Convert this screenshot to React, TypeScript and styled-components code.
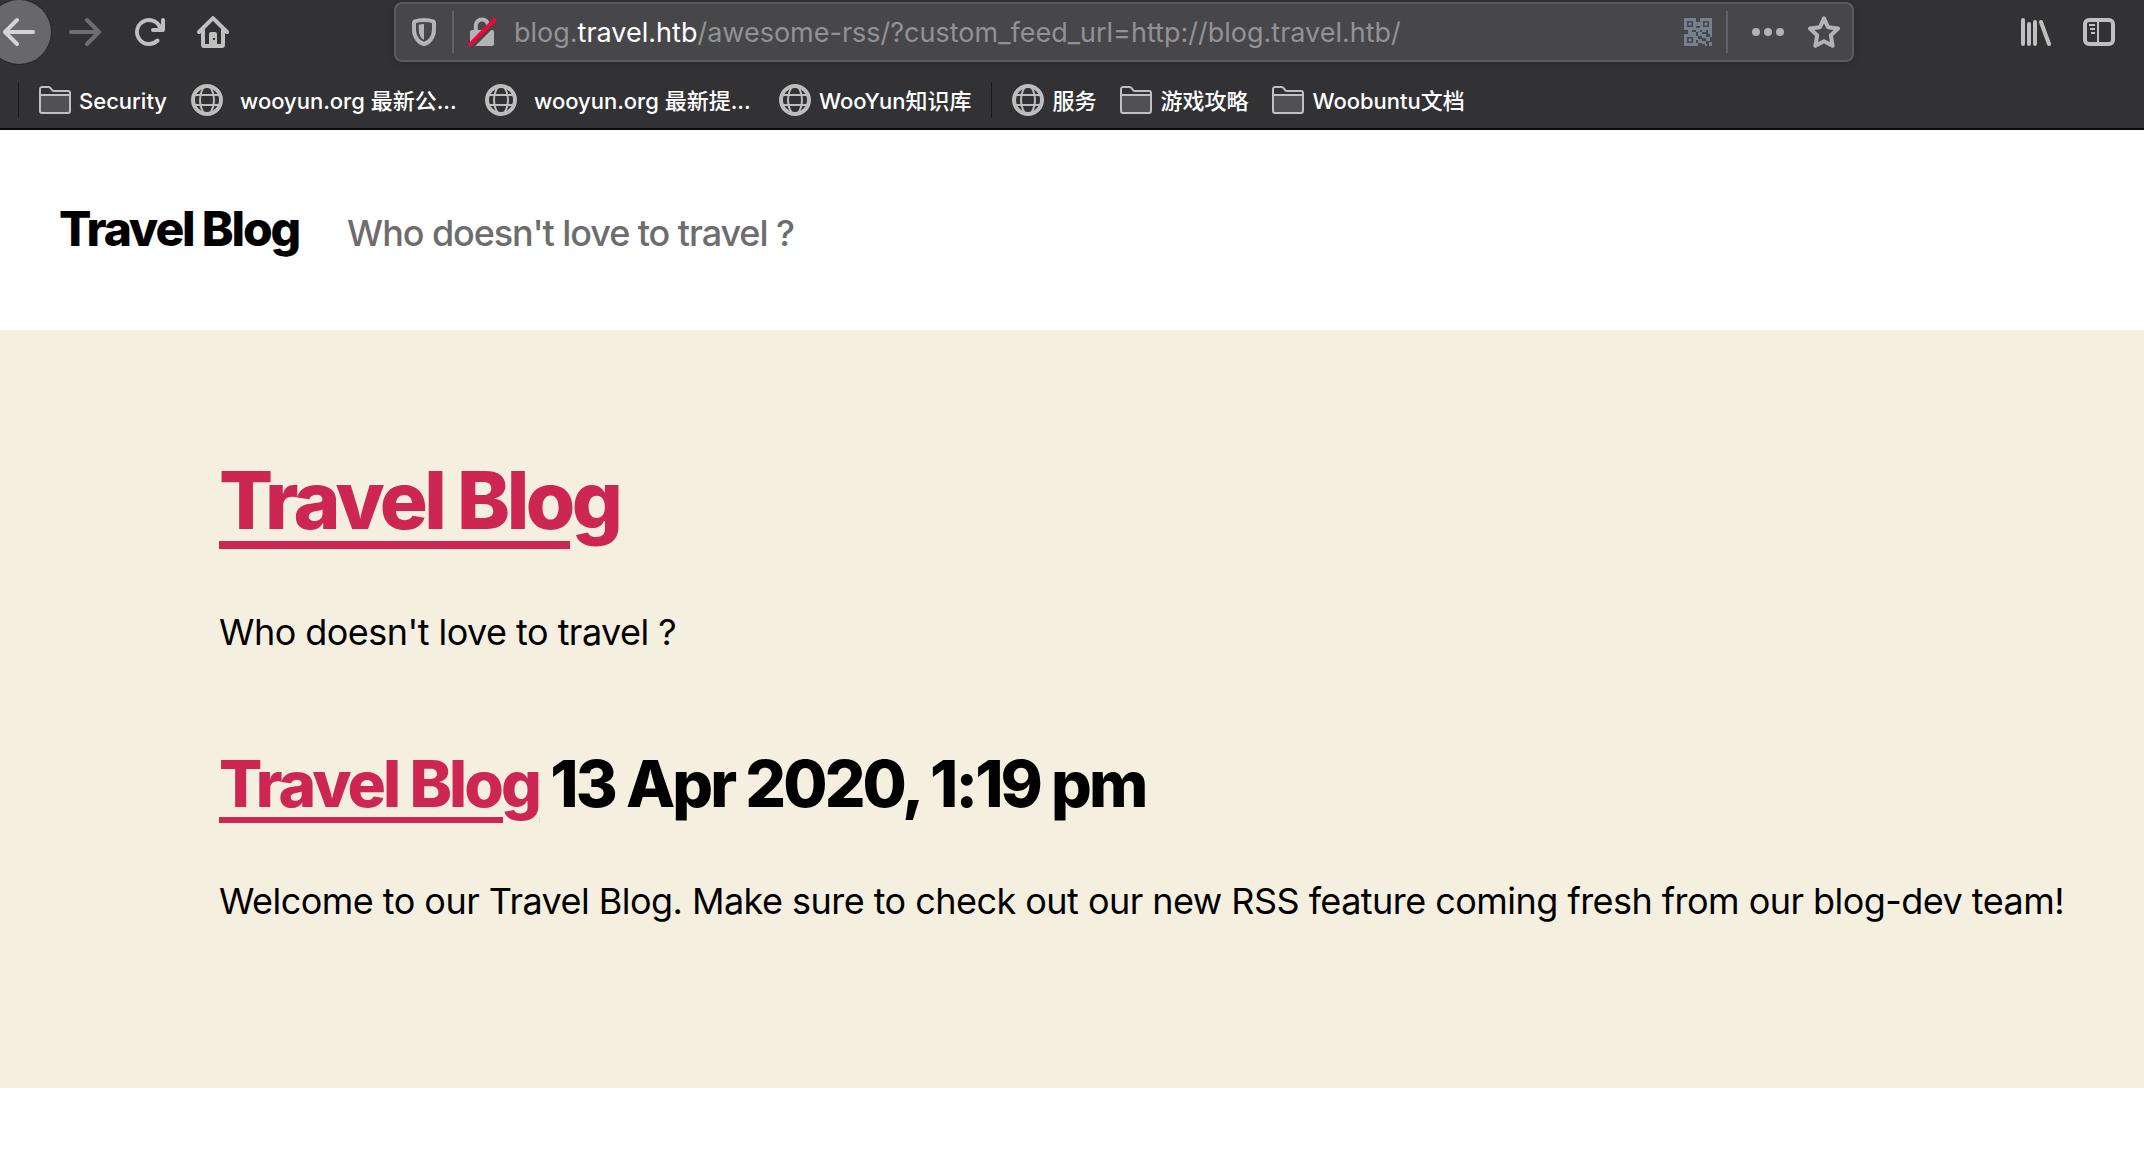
import React from "react";
import styled, { createGlobalStyle } from "styled-components";

const GlobalStyle = createGlobalStyle`
  *, *::before, *::after { box-sizing: border-box; }
  body {
    margin: 0;
    background: #ffffff;
    color: #000000;
    font-family: Inter, "Noto Sans CJK SC", sans-serif;
  }
  h1, h2, h3, p, ul { margin: 0; padding: 0; }
`;

/* Tracking of the blog theme */
const tracking = { heading: "-0.045em", tagline: "-0.03em", body: "-0.015em" };

/* ---------- Browser chrome ---------- */

const Chrome = styled.header`
  background: #323234;
  border-bottom: 2px solid #0c0c0d;
  overflow: hidden;
`;

const NavBar = styled.nav`
  display: flex;
  align-items: center;
  height: 64px;
  padding-right: 13px;
`;

const ToolButton = styled.button<{ $dim?: boolean }>`
  display: flex;
  flex: none;
  align-items: center;
  justify-content: center;
  width: 64px;
  height: 64px;
  padding: 0;
  border: 0;
  background: none;
  color: ${(p) => (p.$dim ? "#6f6f70" : "#bfbfc0")};
`;

const BackButton = styled(ToolButton)`
  margin: 0 2px 0 -13px;
  border-radius: 50%;
  background: #68686a;
  box-shadow: 0 0 0 1px #28282a;
  color: #d4d4d5;
`;

const Spacer = styled.div`
  flex: 0 1 149px;
`;

const UrlBar = styled.div`
  display: flex;
  flex: 1;
  align-items: center;
  min-width: 0;
  height: 60px;
  padding: 0 12px;
  border: 2px solid #5b5b5d;
  border-radius: 8px;
  background: #474749;
  box-shadow: 0 2px 6px rgba(0, 0, 0, 0.15);
`;

const BarButton = styled.button`
  display: flex;
  flex: none;
  padding: 0;
  border: 0;
  background: none;
  color: #b4b4b6;
`;

const BarActions = styled.div`
  display: flex;
  flex: none;
  align-items: center;
  gap: 24px;
`;

const BarDivider = styled.span`
  flex: none;
  width: 2px;
  height: 42px;
  margin: 0 12px;
  background: #5f636d;
`;

const ActionDivider = styled(BarDivider)`
  margin: 0 24px 0 14px;
`;

const Address = styled.label`
  display: grid;
  flex: 1;
  align-items: center;
  min-width: 0;
  padding-top: 2px;
  margin-left: 16px;
  font-size: 27px;
  line-height: 40px;
  color: #929294;
`;

const AddressInput = styled.input`
  grid-area: 1 / 1;
  width: 100%;
  padding: 0;
  border: 0;
  outline: 0;
  background: none;
  font: inherit;
  color: transparent;
  caret-color: #ffffff;
`;

const AddressText = styled.span`
  grid-area: 1 / 1;
  overflow: hidden;
  white-space: nowrap;
  pointer-events: none;
`;

const Domain = styled.span`
  color: #ffffff;
`;

const Bookmarks = styled.ul`
  display: flex;
  align-items: center;
  gap: 24px;
  height: 64px;
  padding: 8px 0 0 0;
  list-style: none;
`;

const BookmarkItem = styled.li`
  flex: none;
`;

const BookmarkLink = styled.a`
  display: flex;
  align-items: center;
  gap: 8px;
  color: #ffffff;
  font-size: 22px;
  font-weight: 500;
  line-height: 32px;
  text-decoration: none;
`;

const BookmarkLabel = styled.span<{ $cropped?: boolean }>`
  width: ${(p) => (p.$cropped ? "230px" : "auto")};
  padding: 2px 0 0 ${(p) => (p.$cropped ? "9px" : "0")};
  white-space: nowrap;
`;

const BookmarkDivider = styled.li`
  flex: none;
  width: 1px;
  height: 36px;
  margin: 0 -4px;
  background: #19191b;
`;

const FirstDivider = styled(BookmarkDivider)`
  margin-left: 18px;
`;

/* ---------- Blog page ---------- */

const SiteHeader = styled.header`
  display: flex;
  flex-wrap: wrap;
  align-items: baseline;
  gap: 48px;
  padding: 69px 59px 71px;
`;

const SiteTitle = styled.h1`
  font-size: 48px;
  font-weight: 800;
  line-height: 60px;
  letter-spacing: ${tracking.heading};
`;

const SiteLink = styled.a`
  color: inherit;
  text-decoration: none;
`;

const Tagline = styled.p`
  color: #6d6d6d;
  font-size: 36px;
  font-weight: 500;
  line-height: 44px;
  letter-spacing: ${tracking.tagline};
`;

const Feed = styled.main`
  padding: 120px 60px 160px 219px;
  background: #f5efe0;
`;

const FeedTitle = styled.h2`
  margin-bottom: 55px;
  font-size: 80px;
  font-weight: 800;
  line-height: 100px;
  letter-spacing: ${tracking.heading};
`;

const PostTitle = styled.h3`
  margin: 85px 0 50px;
  font-size: 64px;
  font-weight: 800;
  line-height: 80px;
  letter-spacing: ${tracking.heading};
`;

const FeedLink = styled.a<{ $thickness: number }>`
  color: #cd2653;
  text-decoration: underline;
  text-decoration-thickness: ${(p) => p.$thickness}px;
  text-underline-offset: ${(p) => p.$thickness + 4}px;
`;

const Text = styled.p`
  font-size: 36px;
  line-height: 54px;
  letter-spacing: ${tracking.body};
`;

/* ---------- Icons, all on a 16-unit grid ---------- */

const Icon = ({ children }: { children: React.ReactNode }) => (
  <svg width="32" height="32" viewBox="0 0 16 16" fill="currentColor" aria-hidden="true">
    {children}
  </svg>
);

const ARROW =
  "M15 7H3.414l4.293-4.293a1 1 0 0 0-1.414-1.414l-6 6a1 1 0 0 0 0 1.414l6 6a1 1 0 0 0 1.414-1.414L3.414 9H15a1 1 0 0 0 0-2z";

const BackIcon = () => (
  <Icon>
    <path d={ARROW} />
  </Icon>
);

const ForwardIcon = () => (
  <Icon>
    <path d={ARROW} transform="matrix(-1 0 0 1 16 0)" />
  </Icon>
);

const ReloadIcon = () => (
  <Icon>
    <path d="M15 1a1 1 0 0 0-1 1v2.418A6.995 6.995 0 1 0 8 15a6.954 6.954 0 0 0 4.95-2.05 1 1 0 0 0-1.414-1.414A5.019 5.019 0 1 1 12.549 6H10a1 1 0 0 0 0 2h5a1 1 0 0 0 1-1V2a1 1 0 0 0-1-1z" />
  </Icon>
);

const HomeIcon = () => (
  <Icon>
    <g fill="none" stroke="currentColor" strokeWidth="2" strokeLinecap="round" strokeLinejoin="round">
      <path d="M1 8l7-6.9L15 8" />
      <path d="M3 7v7.5a.5.5 0 0 0 .5.5h9a.5.5 0 0 0 .5-.5V7" />
    </g>
    <path fillRule="evenodd" d="M7 8h2a1 1 0 0 1 1 1v6H6V9a1 1 0 0 1 1-1zm1 3v1h1v-1z" />
  </Icon>
);

const ShieldIcon = () => (
  <Icon>
    <path
      d="M8 2c1.900 0 3.500.3 4.600.7.300.1.400.3.400.6v3.700c0 3.400-2.200 6.200-5 7-2.800-.8-5-3.600-5-7V3.300c0-.3.100-.5.400-.6C4.500 2.300 6.100 2 8 2z"
      fill="none"
      stroke="currentColor"
      strokeWidth="2"
    />
    <path d="M8 4v8c-1.600-.9-2.600-2.700-2.600-4.800V4.400C6.200 4.100 7 4 8 4z" />
  </Icon>
);

const InsecureIcon = () => (
  <Icon>
    <path d="M4.900 8V4.800a3.100 3.100 0 0 1 6.200 0V8" fill="none" stroke="currentColor" strokeWidth="2" />
    <rect x="2" y="7" width="12" height="8" rx="1" />
    <path d="M2.600 15.600L15.600 2.600" stroke="#474749" strokeWidth="2" />
    <path d="M2 14.300L14.200 2" stroke="#f2053c" strokeWidth="2" strokeLinecap="round" />
  </Icon>
);

const QrIcon = () => (
  <svg width="28" height="28" viewBox="0 0 14 14" fill="#74808d" aria-hidden="true">
    <path
      fillRule="evenodd"
      d="M0 0h6v6H0zM1.500 1.500v3h3v-3zM8 0h6v6H8zM9.500 1.500v3h3v-3zM0 8h6v6H0zM1.500 9.500v3h3v-3z"
    />
    <path d="M2.300 2.300h1.400v1.400H2.300zM10.300 2.300h1.400v1.400h-1.400zM2.300 10.300h1.400v1.400H2.300zM6 2h2v2H6zM2 6h2v2H2zM6 5h2v2H6zM9 6h2v1H9zM4 7h2v1H4zM7 7h2v2H7zM12 6h2v2h-2zM9 8h2v2H9zM6 9h1v2H6zM11 9.500h2v2h-2zM7 10.500h2v2H7zM9 11.500h2v1.500H9zM13 8h1v1.500h-1zM12.500 12h1.500v2h-1.500zM10.500 13h1v1h-1zM6 12.500h1V14H6z" />
  </svg>
);

const DotsIcon = () => (
  <Icon>
    <circle cx="2" cy="8" r="2" />
    <circle cx="8" cy="8" r="2" />
    <circle cx="14" cy="8" r="2" />
  </Icon>
);

const StarIcon = () => (
  <Icon>
    <path
      d="M8 1.200l2 4.400 5 .7-3.600 3.300.9 5.300L8 12.600l-4.300 2.300.9-5.300L1 6.300l5-.7z"
      fill="none"
      stroke="currentColor"
      strokeWidth="2"
      strokeLinejoin="round"
    />
  </Icon>
);

const LibraryIcon = () => (
  <Icon>
    <g stroke="currentColor" strokeWidth="2" strokeLinecap="round">
      <path d="M2 2v12M5 4v10M8 3v11M11 3l4 11" />
    </g>
  </Icon>
);

const SidebarIcon = () => (
  <Icon>
    <rect x="1" y="2" width="14" height="12" rx="2" fill="none" stroke="currentColor" strokeWidth="2" />
    <path d="M7 2h1v12H7zM3 4h3v1H3zM3.500 6H6v1H3.500zM4 8h2v1H4z" />
  </Icon>
);

const FolderIcon = () => (
  <Icon>
    <path d="M.5 5.500h15v8a1 1 0 0 1-1 1h-13a1 1 0 0 1-1-1z" fill="#515153" />
    <path
      d="M.5 5.500h15M1.500 1.500h3.300c.4 0 .7.200 1 .6l.8 1c.3.300.5.400.9.400h7a1 1 0 0 1 1 1v9a1 1 0 0 1-1 1h-13a1 1 0 0 1-1-1v-11a1 1 0 0 1 1-1z"
      fill="none"
      stroke="#c0c0c1"
    />
  </Icon>
);

const GlobeIcon = () => (
  <Icon>
    <g fill="none" stroke="#bdbdbe">
      <circle cx="8" cy="8" r="7" strokeWidth="2" />
      <ellipse cx="8" cy="8" rx="3.500" ry="7" />
      <path d="M1.500 5.500h13M1.500 10.500h13" />
    </g>
  </Icon>
);

/* ---------- Data ---------- */

type Bookmark = { label: string; kind: "folder" | "site"; cropped?: boolean };

const BOOKMARKS: Bookmark[][] = [
  [
    { label: "Security", kind: "folder" },
    { label: "wooyun.org 最新公...", kind: "site", cropped: true },
    { label: "wooyun.org 最新提...", kind: "site", cropped: true },
    { label: "WooYun知识库", kind: "site" },
  ],
  [
    { label: "服务", kind: "site" },
    { label: "游戏攻略", kind: "folder" },
    { label: "Woobuntu文档", kind: "folder" },
  ],
];

export default function App() {
  return (
    <>
      <GlobalStyle />
      <Chrome>
        <NavBar aria-label="Browser">
          <BackButton type="button" aria-label="Back">
            <BackIcon />
          </BackButton>
          <ToolButton type="button" aria-label="Forward" $dim>
            <ForwardIcon />
          </ToolButton>
          <ToolButton type="button" aria-label="Reload">
            <ReloadIcon />
          </ToolButton>
          <ToolButton type="button" aria-label="Home">
            <HomeIcon />
          </ToolButton>
          <Spacer />
          <UrlBar>
            <BarButton type="button" aria-label="Tracking protection">
              <ShieldIcon />
            </BarButton>
            <BarDivider />
            <BarButton type="button" aria-label="Connection is not secure">
              <InsecureIcon />
            </BarButton>
            <Address>
              <AddressInput
                type="text"
                aria-label="Address"
                defaultValue="blog.travel.htb/awesome-rss/?custom_feed_url=http://blog.travel.htb/"
              />
              <AddressText aria-hidden="true">
                blog.<Domain>travel.htb</Domain>/awesome-rss/?custom_feed_url=http://blog.travel.htb/
              </AddressText>
            </Address>
            <BarButton type="button" aria-label="QR code">
              <QrIcon />
            </BarButton>
            <ActionDivider />
            <BarActions>
              <BarButton type="button" aria-label="Page actions">
                <DotsIcon />
              </BarButton>
              <BarButton type="button" aria-label="Bookmark this page">
                <StarIcon />
              </BarButton>
            </BarActions>
          </UrlBar>
          <Spacer />
          <ToolButton type="button" aria-label="Library">
            <LibraryIcon />
          </ToolButton>
          <ToolButton type="button" aria-label="Sidebars">
            <SidebarIcon />
          </ToolButton>
        </NavBar>
        <Bookmarks>
          {BOOKMARKS.map((group, i) => (
            <React.Fragment key={i}>
              {i === 0 ? <FirstDivider aria-hidden="true" /> : <BookmarkDivider aria-hidden="true" />}
              {group.map((b) => (
                <BookmarkItem key={b.label}>
                  <BookmarkLink href="#">
                    {b.kind === "folder" ? <FolderIcon /> : <GlobeIcon />}
                    <BookmarkLabel $cropped={b.cropped}>{b.label}</BookmarkLabel>
                  </BookmarkLink>
                </BookmarkItem>
              ))}
            </React.Fragment>
          ))}
        </Bookmarks>
      </Chrome>

      <SiteHeader>
        <SiteTitle>
          <SiteLink href="#">Travel Blog</SiteLink>
        </SiteTitle>
        <Tagline>Who doesn't love to travel ?</Tagline>
      </SiteHeader>

      <Feed>
        <FeedTitle>
          <FeedLink href="#" $thickness={8}>
            Travel Blog
          </FeedLink>
        </FeedTitle>
        <Text>Who doesn't love to travel ?</Text>
        <PostTitle>
          <FeedLink href="#" $thickness={6}>
            Travel Blog
          </FeedLink>{" "}
          13 Apr 2020, 1:19 pm
        </PostTitle>
        <Text>
          Welcome to our Travel Blog. Make sure to check out our new RSS feature coming fresh from our blog-dev team!
        </Text>
      </Feed>
    </>
  );
}
